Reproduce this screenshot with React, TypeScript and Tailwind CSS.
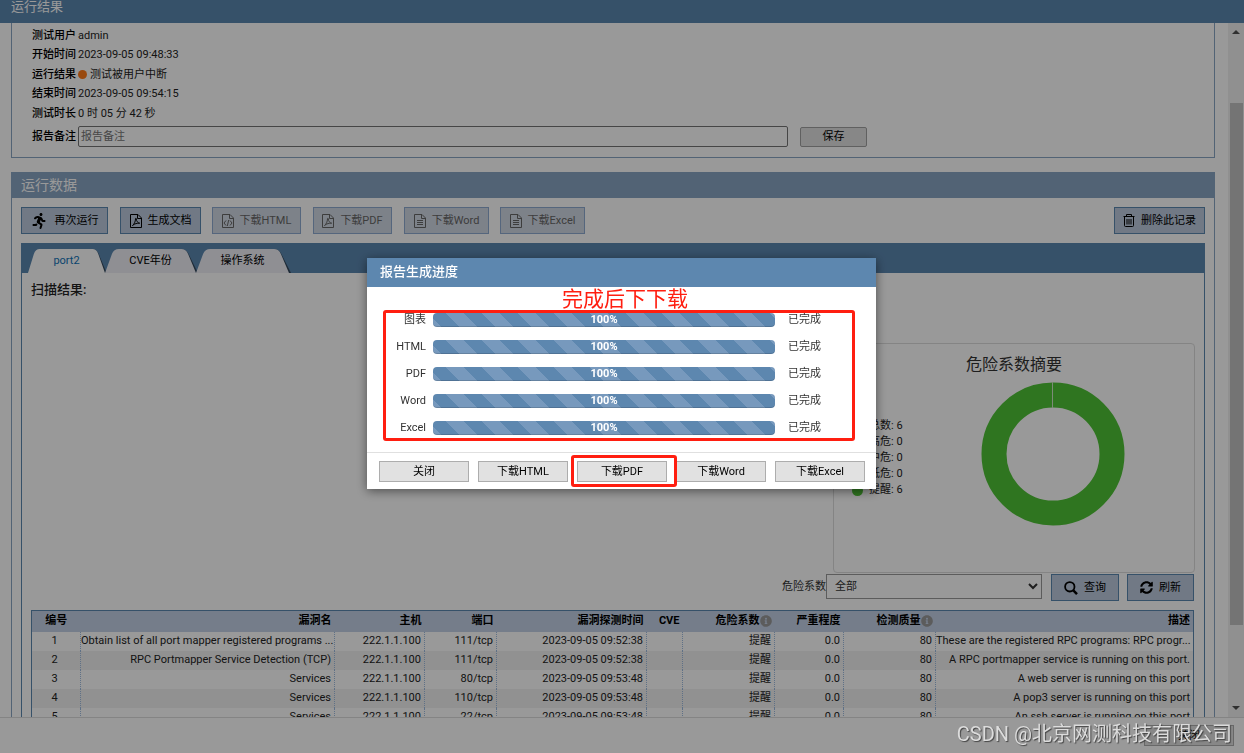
import type { ReactNode } from "react";
import { FaInfoCircle, FaRunning, FaSyncAlt } from "react-icons/fa";

const infoRows = [
  { label: "测试用户", value: "admin" },
  { label: "开始时间", value: "2023-09-05 09:48:33" },
  { label: "运行结果", value: "测试被用户中断", dot: true },
  { label: "结束时间", value: "2023-09-05 09:54:15" },
  { label: "测试时长", value: "0 时 05 分 42 秒" },
];

const legend = [
  { label: "总数", value: 6, color: "bg-[#5b87b0]" },
  { label: "高危", value: 0, color: "bg-[#e03b3b]" },
  { label: "中危", value: 0, color: "bg-[#f5a623]" },
  { label: "低危", value: 0, color: "bg-[#f2dc3c]" },
  { label: "提醒", value: 6, color: "bg-[#4fc336]" },
];

const columns = [
  { title: "编号", width: "w-[49px]" },
  { title: "漏洞名", width: "w-[254px]" },
  { title: "主机", width: "w-[90px]" },
  { title: "端口", width: "w-[72px]" },
  { title: "漏洞探测时间", width: "w-[150px]" },
  { title: "CVE", width: "w-[36px]" },
  { title: "危险系数", width: "w-[92px]", info: true },
  { title: "严重程度", width: "w-[69px]" },
  { title: "检测质量", width: "w-[92px]", info: true },
  { title: "描述", width: "" },
];

const rows = [
  ["1", "Obtain list of all port mapper registered programs ...", "222.1.1.100", "111/tcp", "2023-09-05 09:52:38", "", "提醒", "0.0", "80", "These are the registered RPC programs: RPC progr..."],
  ["2", "RPC Portmapper Service Detection (TCP)", "222.1.1.100", "111/tcp", "2023-09-05 09:52:38", "", "提醒", "0.0", "80", "A RPC portmapper service is running on this port."],
  ["3", "Services", "222.1.1.100", "80/tcp", "2023-09-05 09:53:48", "", "提醒", "0.0", "80", "A web server is running on this port"],
  ["4", "Services", "222.1.1.100", "110/tcp", "2023-09-05 09:53:48", "", "提醒", "0.0", "80", "A pop3 server is running on this port"],
  ["5", "Services", "222.1.1.100", "22/tcp", "2023-09-05 09:53:48", "", "提醒", "0.0", "80", "An ssh server is running on this port"],
];

const reports = ["图表", "HTML", "PDF", "Word", "Excel"];

function FileIcon({ kind }: { kind: "pdf" | "html" | "text" }) {
  return (
    <svg viewBox="0 0 12 14" className="w-3 h-3.5 shrink-0" fill="none" stroke="currentColor" strokeWidth={1}>
      <path d="M0.5 0.5h7.5l3.5 3.5v9.5h-11z" />
      <path d="M7.5 0.5v4h4" />
      {kind === "pdf" && <path d="M2.5 11.5c1.5-1 3-4 3-6.5 0-1 .8-1 .8 0 0 2 1.5 4 3.4 4.2-2.5-.3-5 .5-7.2 2.3z" />}
      {kind === "html" && <path d="M4 6.5l-2 2.5 2 2.5M8 6.5l2 2.5-2 2.5M6.7 6l-1.4 6" />}
      {kind === "text" && <path d="M3 6.5h6M3 8.5h6M3 10.5h6" />}
    </svg>
  );
}

function TrashIcon() {
  return (
    <svg viewBox="0 0 12 13" className="w-3 h-[13px] shrink-0" fill="none" stroke="currentColor" strokeWidth={1}>
      <path d="M0.5 2.5h11M3.5 2.5v-2h5v2M1.5 2.5v9q0 1 1 1h7q1 0 1-1v-9M4 5v5.5M6 5v5.5M8 5v5.5" />
    </svg>
  );
}

function SearchIcon() {
  return (
    <svg viewBox="0 0 14 14" className="w-3.5 h-3.5 shrink-0" fill="none" stroke="currentColor">
      <circle cx="5.8" cy="5.8" r="4.7" strokeWidth={1.8} />
      <path d="M9.3 9.3l3.7 3.9" strokeWidth={2.4} />
    </svg>
  );
}

function ToolButton({ icon, children, disabled, className = "" }: { icon: ReactNode; children: ReactNode; disabled?: boolean; className?: string }) {
  return (
    <button
      type="button"
      disabled={disabled}
      className={`flex h-[27px] items-center justify-center gap-1.5 whitespace-nowrap border border-[#5b87b0] bg-[#bccade] text-black disabled:border-[#8eabd0] disabled:bg-[#d1d9e5] disabled:text-[#666] ${className}`}
    >
      {icon}
      {children}
    </button>
  );
}

function Tab({ children, active, className }: { children: ReactNode; active?: boolean; className: string }) {
  return (
    <button
      type="button"
      role="tab"
      aria-selected={!!active}
      className={`relative h-6 ${active ? "text-[#1173b8]" : "text-black"} ${className}`}
    >
      <svg viewBox="0 0 92 24" preserveAspectRatio="none" className="absolute inset-0 h-full w-full overflow-visible">
        <path d="M78 0Q83 1 85 6L94 24H85z" fill="#33485c" />
        <path d="M0 24L7 5Q9 0 14 0H77Q82 0 84 5L92 24z" fill={active ? "#ffffff" : "#eeeff6"} />
      </svg>
      <span className="relative">{children}</span>
    </button>
  );
}

function RiskSummary() {
  return (
    <section className="ml-auto flex h-[230px] w-[362px] flex-col rounded border border-[#ddd]">
      <h3 className="mt-[9px] text-center text-base leading-6 text-[#333]">危险系数摘要</h3>
      <div className="flex">
        <ul className="mt-[41px] ml-[18px] w-[129px] leading-4 text-[#222]">
          {legend.map((item) => (
            <li key={item.label} className="flex items-center gap-1.5">
              <span className={`h-[11px] w-[11px] rounded-full ${item.color}`} />
              {item.label}: {item.value}
            </li>
          ))}
        </ul>
        <svg viewBox="0 0 144 144" className="mt-[5px] h-36 w-36">
          <circle cx="72" cy="72" r="59" fill="none" stroke="#4fc336" strokeWidth={25} />
          <path d="M71.5 0v26" stroke="#cfe8c8" />
        </svg>
      </div>
    </section>
  );
}

function ResultTable() {
  return (
    <table className="w-full table-fixed border-collapse border border-[#5b87b0] text-right text-[#222]">
      <thead>
        <tr className="h-[21px] bg-[#c3d1e7] text-black">
          {columns.map((col, i) => (
            <th key={col.title} className={`overflow-hidden whitespace-nowrap px-[3px] font-bold ${col.width} ${i === 0 ? "text-center" : ""}`}>
              {col.title}
              {col.info && <FaInfoCircle className="inline h-3 w-3 text-[#999]" />}
            </th>
          ))}
        </tr>
      </thead>
      <tbody>
        {rows.map((row) => (
          <tr key={row[0]} className="h-[19px] even:bg-[#f2f2f2]">
            {row.map((cell, i) => (
              <td key={i} className={`whitespace-nowrap border-r border-dotted border-[#9dbbe0] pr-[3px] leading-[18px] last:border-r-0 ${i === 0 ? "text-center" : ""}`}>
                {cell}
              </td>
            ))}
          </tr>
        ))}
      </tbody>
    </table>
  );
}

function DialogButton({ children }: { children: ReactNode }) {
  return (
    <button type="button" className="h-[21px] flex-1 border border-[#adadad] bg-[#e1e1e1] text-black">
      {children}
    </button>
  );
}

function ProgressDialog() {
  return (
    <div className="fixed inset-0 flex items-start justify-center bg-black/40 pt-[258px] pr-px">
      <div role="dialog" aria-labelledby="progress-title" className="relative w-[509px] bg-white shadow-[0_2px_10px_rgba(0,0,0,0.5)]">
        <h2 id="progress-title" className="h-[29px] bg-[#5d87af] pl-[13px] text-[13px] leading-[27px] font-medium text-white">
          报告生成进度
        </h2>
        <div className="flex h-[165px] flex-col gap-[13px] pt-[26px] pr-[55px] text-[#333]">
          {reports.map((name) => (
            <div key={name} className="flex h-3.5 items-center leading-3.5">
              <span className="w-[59px] text-right">{name}</span>
              <div
                role="progressbar"
                aria-label={name}
                aria-valuenow={100}
                className="ml-[7px] flex-1 rounded-[4px] bg-[#5d87af] bg-[linear-gradient(45deg,#7799bd_25%,transparent_25%,transparent_50%,#7799bd_50%,#7799bd_75%,transparent_75%)] bg-[length:36px_36px] bg-[position:12px_0px] text-center font-bold text-white shadow-[inset_0_-1px_0_rgba(0,0,0,0.15)]"
              >
                100%
              </div>
              <span className="ml-[13px] w-[33px] whitespace-nowrap">已完成</span>
            </div>
          ))}
        </div>
        <div className="flex gap-[9px] border-t border-[#e0e0e0] px-3 pt-2 pr-[11px] pb-[7px]">
          <DialogButton>关闭</DialogButton>
          <DialogButton>下载HTML</DialogButton>
          <DialogButton>下载PDF</DialogButton>
          <DialogButton>下载Word</DialogButton>
          <DialogButton>下载Excel</DialogButton>
        </div>

        {/* red callouts over the dialog */}
        <div className="absolute top-[52px] left-4 h-[131px] w-[472px] rounded-[3px] border-3 border-[#ff1e10]" />
        <div className="absolute top-[197px] left-[204px] h-8 w-[106px] rounded-[3px] border-3 border-[#ff1e10]" />
        <p className="absolute top-7 left-[195px] text-[21px] leading-[26px] whitespace-nowrap text-[#ff1e10]">完成后下下载</p>
      </div>
    </div>
  );
}

export default function App() {
  return (
    <div className="flex h-screen flex-col overflow-hidden bg-white font-[Roboto,'Noto_Sans_CJK_SC',sans-serif] text-[11px] leading-4">
      <header className="h-[23px] shrink-0 bg-[#5b87b0] pl-[11px] text-[13px] leading-[14px] text-white">运行结果</header>

      <div className="flex min-h-0 flex-1">
        <main className="min-w-0 flex-1 overflow-hidden pr-[13px] pl-[11px]">
          <section className="border border-t-0 border-[#89a5c3] pt-[3px] pb-2.5 pl-5">
            <dl className="flex h-[97px] flex-col justify-between text-[#222]">
              {infoRows.map((row) => (
                <div key={row.label} className="flex h-[19px] items-center gap-0.5">
                  <dt className="font-medium text-black">{row.label}</dt>
                  <dd className="flex items-center gap-[3px]">
                    {row.dot && <span className="h-[9px] w-[9px] rounded-full bg-[#ff7a1a]" />}
                    {row.value}
                  </dd>
                </div>
              ))}
            </dl>
            <div className="mt-[3px] flex h-[21px] items-center">
              <label htmlFor="remark" className="w-[46px] shrink-0 font-medium">报告备注</label>
              <input id="remark" placeholder="报告备注" className="h-full w-[710px] rounded-[2px] border border-[#767676] px-0.5 placeholder:text-[#757575]" />
              <button type="button" className="ml-3 h-5 w-[67px] rounded-[2px] border border-[#a0a0a0] bg-[#e1e1e1]">保存</button>
            </div>
          </section>

          <section className="mt-3.5 border border-[#89a5c3]">
            <h2 className="h-[25px] bg-[#89a5c3] pl-[9px] text-[14px] leading-6 text-white">运行数据</h2>
            <div className="px-[9px] pt-[9px]">
              <div className="flex">
                <ToolButton className="w-[87px]" icon={<FaRunning className="mr-0.5 h-4 w-4" />}>再次运行</ToolButton>
                <ToolButton className="ml-3 w-[81px]" icon={<FileIcon kind="pdf" />}>生成文档</ToolButton>
                <ToolButton disabled className="ml-[11px] w-[89px]" icon={<FileIcon kind="html" />}>下载HTML</ToolButton>
                <ToolButton disabled className="ml-3 w-[79px]" icon={<FileIcon kind="pdf" />}>下载PDF</ToolButton>
                <ToolButton disabled className="ml-3 w-[85px]" icon={<FileIcon kind="text" />}>下载Word</ToolButton>
                <ToolButton disabled className="ml-[11px] w-[85px]" icon={<FileIcon kind="text" />}>下载Excel</ToolButton>
                <ToolButton className="ml-auto w-[91px]" icon={<TrashIcon />}>删除此记录</ToolButton>
              </div>

              <div className="mt-[9px] border border-[#5b87b0]">
                <div role="tablist" className="flex h-[29px] items-end bg-[#5b87b0] pl-1.5">
                  <Tab active className="w-[77px]">port2</Tab>
                  <Tab className="w-[91px]">CVE年份</Tab>
                  <Tab className="w-[93px]">操作系统</Tab>
                </div>
                <div className="px-[9px] pt-[7px] pb-2.5">
                  <h3 className="h-[63px] text-[13px] leading-5 font-medium text-[#222]">扫描结果:</h3>
                  <RiskSummary />
                  <div className="pt-px pr-px">
                    <div className="flex h-9 items-start justify-end">
                      <label htmlFor="risk" className="leading-[26px] text-[#333]">危险系数</label>
                      <select id="risk" className="h-[25px] w-[216px] border border-[#999] bg-white pl-1 text-[#333]">
                        <option>全部</option>
                      </select>
                      <ToolButton className="ml-[9px] w-[68px]" icon={<SearchIcon />}>查询</ToolButton>
                      <ToolButton className="ml-2 w-[67px]" icon={<FaSyncAlt className="h-[13px] w-[13px]" />}>刷新</ToolButton>
                    </div>
                    <ResultTable />
                  </div>
                </div>
              </div>
            </div>
          </section>
        </main>

        <div className="flex w-4 shrink-0 flex-col items-center bg-[#f1f1f1] py-[7px]">
          <svg viewBox="0 0 8 4" className="h-1 w-2"><path d="M0 4L4 0L8 4z" fill="#505050" /></svg>
          <div className="mt-[69px] h-[522px] w-[13px] bg-[#c1c1c1]" />
          <svg viewBox="0 0 8 4" className="mt-auto h-1 w-2"><path d="M0 0L4 4L8 0z" fill="#505050" /></svg>
        </div>
      </div>

      <footer className="flex h-9 shrink-0 justify-end border-t border-[#ddd] pt-[7px] pr-2.5">
        <button type="button" className="h-[21px] w-[90px] border border-[#adadad] bg-[#e1e1e1]">关闭</button>
      </footer>

      <ProgressDialog />

      <p className="fixed right-3 bottom-1.5 text-[20px] leading-[26px] whitespace-nowrap text-[#dcdcdc] [text-shadow:1px_1px_1px_#444]">
        CSDN @北京网测科技有限公司
      </p>
    </div>
  );
}
